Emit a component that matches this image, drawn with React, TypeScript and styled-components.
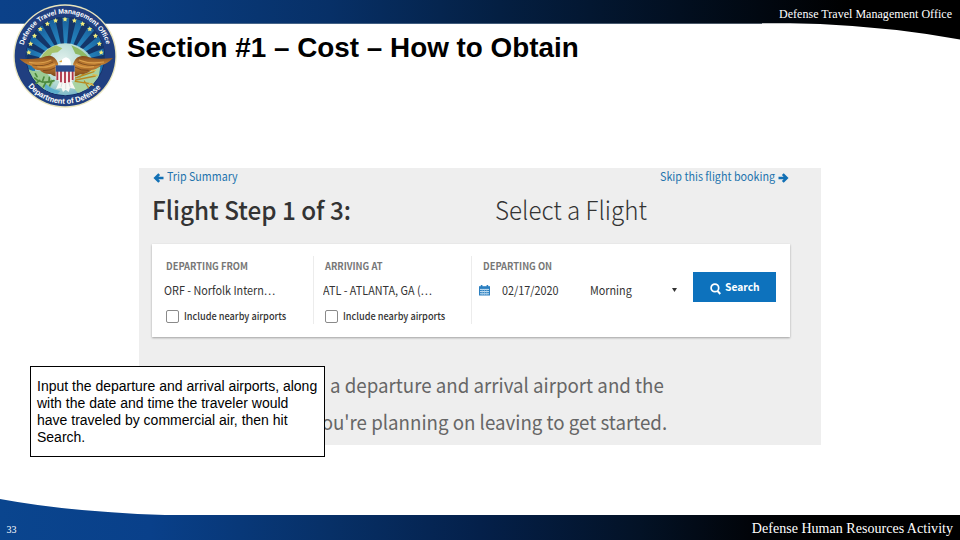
import React from 'react';
import styled, { createGlobalStyle } from 'styled-components';

const SANS = '"Liberation Sans", Arial, sans-serif';
const SERIF = '"Liberation Serif", "Times New Roman", serif';
const SOURCE = '"Noto Sans CJK SC", "Noto Sans", sans-serif';
const LINK = '#2273ad';

const GlobalStyle = createGlobalStyle`
  *, *::before, *::after { box-sizing: border-box; }
  html, body { margin: 0; padding: 0; background: #fff; }
  body { overflow: hidden; }
`;

const Slide = styled.div`
  position: relative;
  display: flex;
  flex-direction: column;
  width: 960px;
  height: 540px;
  overflow: hidden;
  background: #fff;
`;

const HeaderBand = styled.header`
  flex: none;
  display: flex;
  justify-content: flex-end;
  height: 40px;
  padding: 6px 8px 0 0;
  background:
    linear-gradient(90deg, #58789c 0, #3e5c80 400px, #4c5661 762px, transparent 762px) 0 23px / 100% 1px no-repeat,
    linear-gradient(90deg, #0b4189 0, #0a3e82 130px, #073067 330px, #041f42 500px, #020f20 680px, #000 850px);
  clip-path: path('M0 0H960V39.5Q895 27.5 820 24L790 23.2H762V24H0Z');
`;

const OfficeName = styled.span`
  font: 12px/16px ${SERIF};
  letter-spacing: 0.03px;
  color: #fff;
  white-space: nowrap;
`;

const SlideTitle = styled.h1`
  flex: none;
  margin: -9px 0 0 127px;
  font: bold 27.85px/34px ${SANS};
  color: #000;
  white-space: nowrap;
`;

const SealMark = styled.svg`
  position: absolute;
  left: 12px;
  top: 2px;
  width: 106px;
  height: 108px;
`;

const Capture = styled.main`
  flex: none;
  display: flex;
  flex-direction: column;
  width: 682px;
  height: 277px;
  margin: 103px 0 0 139px;
  background: #eee;
  font-family: ${SOURCE};
`;

const Narrow = styled.span<{ $ratio?: number }>`
  display: inline-block;
  transform: scaleX(${(p) => p.$ratio ?? 0.935});
  transform-origin: 0 50%;
  white-space: nowrap;
`;

const LinkRow = styled.nav`
  display: grid;
  grid-template-columns: 507px 1fr;
  padding-left: 14px;
  height: 17px;
  font-size: 11.5px;
  line-height: 17px;
  color: ${LINK};
`;

const StepLink = styled.span<{ $width: number }>`
  display: grid;
  grid-auto-flow: column;
  align-items: center;
  justify-content: start;
  width: ${(p) => p.$width}px;
  gap: 3px;
  svg { display: block; margin-top: 2px; }
`;

const LinkText = styled.span<{ $width: number }>`
  width: ${(p) => p.$width}px;
  white-space: nowrap;
`;

const Heading = styled.h2`
  display: grid;
  grid-template-columns: 343px 1fr;
  margin: 7px 0 0;
  padding-left: 13px;
  font-size: 25.5px;
  font-weight: 500;
  line-height: 34px;
  color: #333;
`;

const StepName = styled.span`
  font-weight: 300;
`;

const SearchCard = styled.section`
  display: grid;
  grid-template-columns: 162px 158px 1fr;
  width: 638px;
  height: 93px;
  margin: 18px 0 0 13px;
  padding: 12px 0 13px;
  background: #fff;
  box-shadow: 0 1px 2px rgba(0, 0, 0, 0.32);
`;

const Field = styled.div<{ $inset: number; $divided?: boolean }>`
  display: flex;
  flex-direction: column;
  padding: 3px 0 0 ${(p) => p.$inset}px;
  border-right: ${(p) => (p.$divided ? '1px solid #ececec' : '0')};
`;

const Label = styled.div<{ $indent: number }>`
  padding-left: ${(p) => p.$indent}px;
  font-size: 9.9px;
  font-weight: 700;
  line-height: 14px;
  color: #777;
`;

const Value = styled.div`
  margin-top: 9px;
  font-size: 11.7px;
  line-height: 16px;
  color: #333;
`;

const CheckRow = styled.label`
  display: flex;
  align-items: center;
  height: 13px;
  margin: 12px 0 0 2px;
  gap: 5px;
  font-size: 9.9px;
  font-weight: 500;
  line-height: 13px;
  color: #333;
`;

const CheckBox = styled.span`
  width: 13px;
  height: 13px;
  border: 1px solid #8a8a8a;
  border-radius: 2px;
  background: #fff;
`;

const DepartureArea = styled.div`
  display: grid;
  grid-template-columns: 221px 83px;
`;

const DateRow = styled(Value)`
  display: grid;
  grid-template-columns: 23px 87.5px 82.5px 8px;
  align-items: center;
`;

const SearchButton = styled.button`
  display: flex;
  align-items: center;
  gap: 3.5px;
  width: 83px;
  height: 30px;
  margin-top: 16px;
  padding: 0 0 0 17px;
  border: 0;
  background: #0d72bd;
  color: #fff;
  font: bold 10.8px/28px ${SOURCE};
  svg { margin-top: 4px; }
`;

const ButtonText = styled.span`
  height: 30px;
`;

const Prompt = styled.p`
  display: flex;
  flex-direction: column;
  margin: 29px 0 0;
  font-size: 20px;
  line-height: 37px;
  color: #666;
`;

const PromptLine = styled.span<{ $indent: number }>`
  padding-left: ${(p) => p.$indent}px;
`;

const Callout = styled.aside`
  position: absolute;
  left: 30px;
  top: 366px;
  width: 295px;
  height: 91px;
  padding: 11px 0 0 6px;
  border: 1px solid #000;
  background: #fff;
  font: 14px/17px ${SANS};
  color: #000;
  white-space: nowrap;
`;

const CalloutLine = styled.div``;

const FooterBand = styled.footer`
  flex: none;
  display: flex;
  justify-content: space-between;
  height: 42px;
  margin-top: auto;
  padding: 22px 7px 0 6.5px;
  background: linear-gradient(90deg, #0a458e 0, #09408a 150px, #073067 330px, #04204a 480px, #031226 640px, #010409 750px, #000 820px);
  clip-path: path('M0 1Q70 14 165 17H960V42H0Z');
  color: #fff;
`;

const PageNumber = styled.span`
  font: 10px/19px ${SERIF};
`;

const ActivityName = styled.span`
  font: 14px/17px ${SERIF};
  letter-spacing: 0.03px;
`;

const ArrowIcon = ({ flipped = false }: { flipped?: boolean }) => (
  <svg width="11" height="10" viewBox="0 0 11 10" fill="none" stroke="#1270b5" strokeWidth="2.6">
    {flipped ? <path d="M0.5 5H8.6M4.8 1.1L8.7 5L4.8 8.9" /> : <path d="M10.5 5H2.4M6.2 1.1L2.3 5L6.2 8.9" />}
  </svg>
);

const CalendarIcon = () => (
  <svg width="11" height="11" viewBox="0 0 11 11">
    <path d="M0 1.2H11V10.5H0Z" fill="#2b7fc0" />
    <path d="M2.6 0V2.4M8.4 0V2.4" stroke="#2b7fc0" strokeWidth="1.6" />
    <path d="M1 4.4H10M1 6.6H10M1 8.8H10" stroke="#e3f0f9" strokeWidth="0.9" />
    <path d="M3.2 4V10M5.5 4V10M7.8 4V10" stroke="#a9cfe9" strokeWidth="0.6" />
  </svg>
);

const CaretIcon = () => (
  <svg width="5" height="4" viewBox="0 0 5 4">
    <path d="M0 0H5L2.5 4Z" fill="#333" />
  </svg>
);

const SearchIcon = () => (
  <svg width="11" height="12" viewBox="0 0 11 12" fill="none" stroke="#fff" strokeWidth="1.7">
    <circle cx="4.9" cy="4.9" r="3.8" />
    <path d="M7.5 7.9L10.3 11" strokeWidth="2.1" />
  </svg>
);

const STAR_ANGLES = [175, 161, 147, 133, 119, 105, 90, 75, 61, 47, 33, 19, 5];
const RAY_ANGLES = [4, 22, 40, 58, 76, 94, 112, 130, 148, 166];

const star = (cx: number, cy: number, r: number) =>
  Array.from({ length: 10 }, (_, i) => {
    const a = (Math.PI / 5) * i - Math.PI / 2;
    const d = i % 2 ? r * 0.5 : r;
    return `${cx + d * Math.cos(a)},${cy + d * Math.sin(a)}`;
  }).join(' ');

const ray = (deg: number) => {
  const at = (d: number) => `${160 + 190 * Math.cos((d * Math.PI) / 180)},${185 - 190 * Math.sin((d * Math.PI) / 180)}`;
  return `160,185 ${at(deg)} ${at(deg + 9)}`;
};

const Seal = () => (
  <SealMark viewBox="0 0 318 324">
    <defs>
      <clipPath id="disc"><circle cx="160" cy="163" r="117" /></clipPath>
      <path id="upper" d="M35 130A129 129 0 0 1 284 130" />
      <path id="lower" d="M48 253A144 144 0 0 0 270 253" />
      <radialGradient id="sky" cx="0.5" cy="0.6" r="0.6">
        <stop offset="0.3" stopColor="#2b93cc" />
        <stop offset="1" stopColor="#175c98" />
      </radialGradient>
      <radialGradient id="globe" cx="0.45" cy="0.3" r="0.75">
        <stop offset="0" stopColor="#e3f1ee" />
        <stop offset="0.5" stopColor="#b4d9d2" />
        <stop offset="1" stopColor="#3f93bf" />
      </radialGradient>
      <linearGradient id="wing" x1="0" y1="0" x2="0" y2="1">
        <stop offset="0" stopColor="#80491c" />
        <stop offset="0.45" stopColor="#c98536" />
        <stop offset="1" stopColor="#7c4518" />
      </linearGradient>
    </defs>
    <circle cx="159" cy="162" r="155" fill="#e9e5bd" />
    <circle cx="159" cy="162" r="151" fill="#203f80" />
    <circle cx="160" cy="163" r="119" fill="#14295c" />
    <g clipPath="url(#disc)">
      <rect x="40" y="40" width="240" height="246" fill="url(#sky)" />
      {RAY_ANGLES.map((a) => <polygon key={a} points={ray(a)} fill="#143568" />)}
      <circle cx="160" cy="216" r="92" fill="url(#globe)" />
      <path d="M86 170Q98 141 132 130L151 139L137 151L120 153L111 171Z" fill="#a5c36c" />
      <path d="M178 130Q217 144 235 174L212 171L204 159L190 155Z" fill="#8fb965" />
      <path d="M45 200Q70 212 98 205L125 240L108 268L72 262Z" fill="#9bcb93" />
      <path d="M205 212L265 194L255 255L200 276L178 250Z" fill="#a9d3a2" />
      <path d="M97 240Q112 261 145 267L130 282H100Z" fill="#5aaccb" />
    </g>
    <g fill="none" stroke="#4c8a3d" strokeWidth="5" strokeLinecap="round">
      <path d="M68 228Q89 248 126 236" />
      <path d="M75 224L70 215M83 235L72 244M91 239L96 225M101 242L94 255M111 239L112 226M118 240L113 251" />
    </g>
    <g fill="none" stroke="#b88a22" strokeWidth="4" strokeLinecap="round">
      <path d="M190 228L246 209M191 234L250 222M190 238L240 246M204 225L231 199M217 237L230 258" />
      <path d="M237 206L250 205M243 218L255 220M232 244L244 250" stroke="#e0bc4c" />
    </g>
    <g fill="url(#wing)">
      <path d="M22 170Q75 174 101 163Q127 155 138 184L140 222Q127 226 116 216Q94 217 84 205Q65 203 58 191Q40 187 22 170Z" />
      <path d="M303 168Q248 174 222 163Q193 157 184 184L180 222Q193 226 204 217Q225 217 238 204Q256 202 267 190Q287 185 303 168Z" />
    </g>
    <g fill="none" stroke="#dba04c" strokeWidth="3.5">
      <path d="M51 181Q91 187 118 174M76 194Q105 200 129 186" />
      <path d="M276 180Q232 187 201 174M246 194Q213 200 192 186" />
    </g>
    <g fill="none" stroke="#633915" strokeWidth="2">
      <path d="M61 189Q96 196 123 180M93 206Q115 207 134 195" />
      <path d="M266 188Q225 195 197 180M230 205Q207 207 188 195" />
    </g>
    <path d="M145 191Q146 169 162 166Q178 169 177 191Z" fill="#fff" />
    <path d="M149 174L140 180L150 181Z" fill="#d99f32" />
    <path d="M144 235L132 261L148 258L153 270L161 263L170 270L174 258L190 261L177 235Z" fill="#f7f8f4" />
    <path d="M151 240L147 256M161 240V261M170 240L175 256" stroke="#cdd3d4" strokeWidth="2" />
    <path d="M131 191H188V228Q181 241 160 244Q139 241 131 228Z" fill="#f8eeee" />
    <path d="M136 207V234M147 207V241M159 207V243M171 207V241M182 207V234" stroke="#ad3448" strokeWidth="5.5" />
    <path d="M131 190H188V209H131Z" fill="#2a4a8d" />
    {STAR_ANGLES.map((a) => (
      <polygon
        key={a}
        points={star(159 + 109 * Math.cos((a * Math.PI) / 180), 161 - 109 * Math.sin((a * Math.PI) / 180), 8)}
        fill="#f2ed7c"
      />
    ))}
    <g fill="#fff" fontFamily="Liberation Sans, Arial, sans-serif" fontWeight="700">
      <text fontSize="20.5"><textPath href="#upper" textLength="334">Defense Travel Management Office</textPath></text>
      <text fontSize="23"><textPath href="#lower" textLength="248">Department of Defense</textPath></text>
    </g>
  </SealMark>
);

const AirportField = ({ label, value, inset }: { label: string; value: string; inset: number }) => (
  <Field $divided $inset={inset}>
    <Label $indent={2}><Narrow $ratio={0.944}>{label}</Narrow></Label>
    <Value><Narrow $ratio={0.925}>{value}</Narrow></Value>
    <CheckRow>
      <CheckBox />
      <Narrow $ratio={0.93}>Include nearby airports</Narrow>
    </CheckRow>
  </Field>
);

export default function App() {
  return (
    <>
      <GlobalStyle />
      <Slide>
        <HeaderBand>
          <OfficeName>Defense Travel Management Office</OfficeName>
        </HeaderBand>
        <Seal />
        <SlideTitle>Section #1 – Cost – How to Obtain</SlideTitle>

        <Capture>
          <LinkRow>
            <StepLink $width={120}>
              <ArrowIcon />
              <LinkText $width={76}><Narrow $ratio={0.93}>Trip Summary</Narrow></LinkText>
            </StepLink>
            <StepLink $width={135}>
              <LinkText $width={115}><Narrow>Skip this flight booking</Narrow></LinkText>
              <ArrowIcon flipped />
            </StepLink>
          </LinkRow>
          <Heading>
            <Narrow $ratio={0.952}>Flight Step 1 of 3:</Narrow>
            <StepName><Narrow $ratio={0.947}>Select a Flight</Narrow></StepName>
          </Heading>
          <SearchCard>
            <AirportField inset={12} label="DEPARTING FROM" value="ORF - Norfolk Intern…" />
            <AirportField inset={9} label="ARRIVING AT" value="ATL - ATLANTA, GA (…" />
            <DepartureArea>
              <Field $inset={7}>
                <Label $indent={4}><Narrow $ratio={0.944}>DEPARTING ON</Narrow></Label>
                <DateRow>
                  <CalendarIcon />
                  <Narrow $ratio={0.925}>02/17/2020</Narrow>
                  <Narrow $ratio={0.925}>Morning</Narrow>
                  <CaretIcon />
                </DateRow>
              </Field>
              <SearchButton>
                <SearchIcon />
                <ButtonText><Narrow $ratio={0.95}>Search</Narrow></ButtonText>
              </SearchButton>
            </DepartureArea>
          </SearchCard>
          <Prompt>
            <PromptLine $indent={190.5}><Narrow>a departure and arrival airport and the</Narrow></PromptLine>
            <PromptLine $indent={173}><Narrow>you're planning on leaving to get started.</Narrow></PromptLine>
          </Prompt>
        </Capture>

        <Callout>
          <CalloutLine>Input the departure and arrival airports, along</CalloutLine>
          <CalloutLine>with the date and time the traveler would</CalloutLine>
          <CalloutLine>have traveled by commercial air, then hit</CalloutLine>
          <CalloutLine>Search.</CalloutLine>
        </Callout>

        <FooterBand>
          <PageNumber>33</PageNumber>
          <ActivityName>Defense Human Resources Activity</ActivityName>
        </FooterBand>
      </Slide>
    </>
  );
}
